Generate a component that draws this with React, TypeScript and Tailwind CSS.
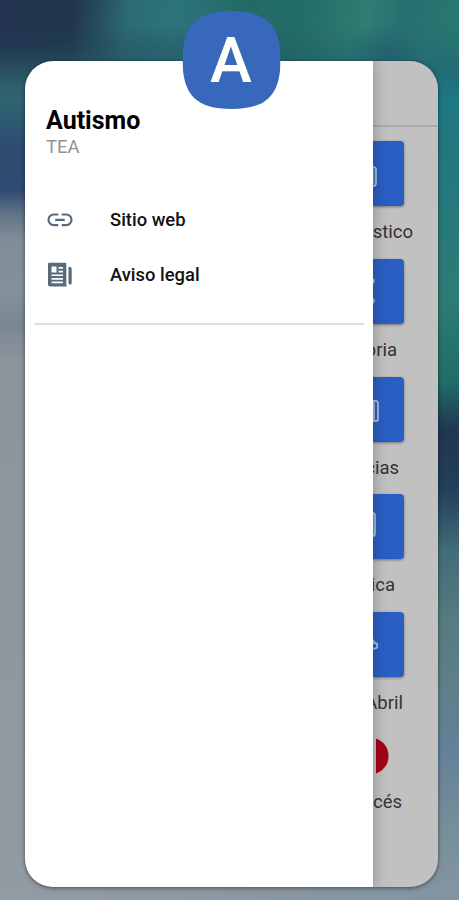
import { clsx } from 'clsx'

type Tile = { label: string; right: string; icon: React.ReactNode }

const stroke = { fill: 'none', stroke: '#a9c0e6', strokeWidth: 1.8 }

const tiles: Tile[] = [
  {
    label: 'stico',
    right: 'pr-[25px]',
    icon: (
      <g {...stroke}>
        <rect x="-14" y="26" width="17" height="19" rx="3" />
        <path d="M.5 28v15" strokeOpacity="0.6" />
      </g>
    ),
  },
  {
    label: 'oria',
    right: 'pr-[41px]',
    icon: (
      <g fill="#a9c0e6">
        <circle cx="-1" cy="22" r="2.8" />
        <circle cx="-1" cy="42" r="2.8" />
      </g>
    ),
  },
  {
    label: 'cias',
    right: 'pr-[39px]',
    icon: (
      <g {...stroke}>
        <rect x="-14" y="24" width="19" height="20" rx="2" />
        <path d="M1 25v18" />
      </g>
    ),
  },
  {
    label: 'tica',
    right: 'pr-[43px]',
    icon: (
      <g {...stroke}>
        <rect x="-14" y="19" width="16" height="23" rx="2" />
        <path d="M0 20v21" strokeOpacity="0.6" />
      </g>
    ),
  },
  {
    label: 'Abril',
    right: 'pr-[35px]',
    icon: <path d="M-1 27l3 4M-3 31h4.500a2.800 2.800 0 0 1 0 5.600h-4.500" {...stroke} />,
  },
]

function LinkIcon() {
  return (
    <svg viewBox="0 0 26 26" className="size-[26px]" fill="none" stroke="#596a79" strokeWidth="2.2">
      <path d="M11.300 7.500H6.800a5.300 5.300 0 0 0 0 10.600h4.500M14.700 7.500h4.500a5.300 5.300 0 0 1 0 10.600h-4.500M8.200 12.800h9.600" />
    </svg>
  )
}

function NewsIcon() {
  return (
    <svg viewBox="0 0 26 26" className="size-[26px]">
      <path
        fill="#596a79"
        fillRule="evenodd"
        d="M2 .8h16.300a1 1 0 0 1 1 1V22.500q0 1 .8 1.900H3a2 2 0 0 1-2-2V1.800A1 1 0 0 1 2 .8zM4.500 4.500v6h5v-6zM11.500 5v1.700h4.500V5zM11.500 8.700v1.700h4.500V8.700zM4.500 12.400v1.700h11.500v-1.700zM4.500 16v1.700h11.500V16zM4.500 19.500v1.700h11.500v-1.700z"
      />
      <path fill="#596a79" d="M21.500 5h1.700a1.500 1.500 0 0 1 1.500 1.500v14.500a1.600 1.600 0 0 1-3.200 0z" />
    </svg>
  )
}

function AppIcon() {
  return (
    <div className="absolute left-1/2 top-[11px] z-20 flex h-[98px] w-[98px] -translate-x-[47.500px] items-center justify-center">
      <svg viewBox="0 0 98 98" className="absolute inset-0 size-full">
        <path
          fill="#3768bc"
          d="M49 0C84 0 98 14 98 49S84 98 49 98 0 84 0 49 14 0 49 0z"
        />
      </svg>
      <span className="relative font-['Roboto'] text-[63px] font-medium leading-none text-[#fffffa]">A</span>
    </div>
  )
}

function MenuItem({ icon, label }: { icon: React.ReactNode; label: string }) {
  return (
    <li className="flex h-[55px] items-center pl-[22px]">
      {icon}
      <span className="ml-[37px] text-[18.400px] font-medium text-[#111]">{label}</span>
    </li>
  )
}

function Drawer() {
  return (
    <aside className="relative z-10 w-[348px] shrink-0 bg-white pt-[44px] shadow-[0_0_14px_rgba(0,0,0,0.3)]">
      <h1 className="pl-[21px] text-[25px] font-bold leading-[32px] text-black">Autismo</h1>
      <p className="pl-[21px] text-[18.500px] leading-[20px] text-[#929292]">TEA</p>
      <ul className="mt-[35px]">
        <MenuItem icon={<LinkIcon />} label="Sitio web" />
        <MenuItem icon={<NewsIcon />} label="Aviso legal" />
      </ul>
      <hr className="mx-[9px] mt-[21px] border-t-2 border-[#dedede]" />
    </aside>
  )
}

function TileColumn() {
  return (
    <main className="flex w-[65px] flex-col bg-[#c1c1c1]">
      <div className="h-[66px] shrink-0 border-b-2 border-[#aaa]" />
      <div className="flex flex-col pt-[14px]">
        {tiles.map((t) => (
          <div key={t.label} className="h-[117.800px]">
            <svg
              viewBox="0 0 31 65"
              className="h-[65px] w-[31px] rounded-r-[4px] bg-[#295fc3] shadow-[0_1px_3px_rgba(0,0,0,0.4)]"
            >
              {t.icon}
            </svg>
            <p className={clsx('flex justify-end pt-[13px] text-[18.500px] leading-[26px] text-[#333]', t.right)}>
              {t.label}
            </p>
          </div>
        ))}
        <svg viewBox="0 0 13 36" className="ml-[3px] mt-[8px] h-[36px] w-[13px]">
          <path fill="#a50017" d="M0 0.500C8 3.500 12.500 10 12.500 18S8 32.500 0 35.500z" />
        </svg>
        <p className="flex justify-end pr-[36px] pt-[15px] text-[18.500px] leading-[26px] text-[#333]">cés</p>
      </div>
    </main>
  )
}

function Wallpaper() {
  return (
    <div className="absolute inset-0 bg-[linear-gradient(180deg,#1e3450_0px,#22455a_45px,#2c5967_70px,#2e6570_100px,#2d4c70_145px,#304a72_190px,#627487_215px,#7f8d96_240px,#83929a_290px,#7a8791_325px,#8c949e_360px,#929aa4_900px)]">
      <div className="absolute inset-0 bg-[linear-gradient(180deg,#287871_0px,#236675_65px,#1d7985_100px,#217780_130px,#2d7b74_300px,#216e69_380px,#203750_430px,#233f5b_490px,#416c77_550px,#567b80_620px,#5d808a_690px,#65809a_750px,#768f99_830px,#8495a2_900px)] [mask-image:linear-gradient(90deg,transparent_100px,#000_420px)]" />
      <div className="absolute inset-x-0 top-0 h-[110px] bg-[linear-gradient(100deg,#23344f_0px,#20364e_75px,#2c6b75_130px,#2c747c_175px,#226a65_245px,#226d67_300px,#2f7d73_365px,#276f70_400px,#287871_459px)] [mask-image:linear-gradient(180deg,#000_0,#000_25px,transparent_85px)]" />
      <div className="absolute left-[345px] top-[25px] h-[60px] w-[80px] bg-[radial-gradient(closest-side,#235f6dcc,transparent)]" />
    </div>
  )
}

export default function App() {
  return (
    <div className="relative h-[900px] w-[459px] overflow-hidden pl-[25px] pt-[61px] font-['Roboto',sans-serif]">
      <Wallpaper />
      <div className="relative h-[826px] w-[413px] rounded-[28px] shadow-[0_1px_4px_rgba(0,0,0,0.5)]">
        <div className="flex h-full overflow-hidden rounded-[28px]">
          <Drawer />
          <TileColumn />
        </div>
      </div>
      <AppIcon />
    </div>
  )
}
